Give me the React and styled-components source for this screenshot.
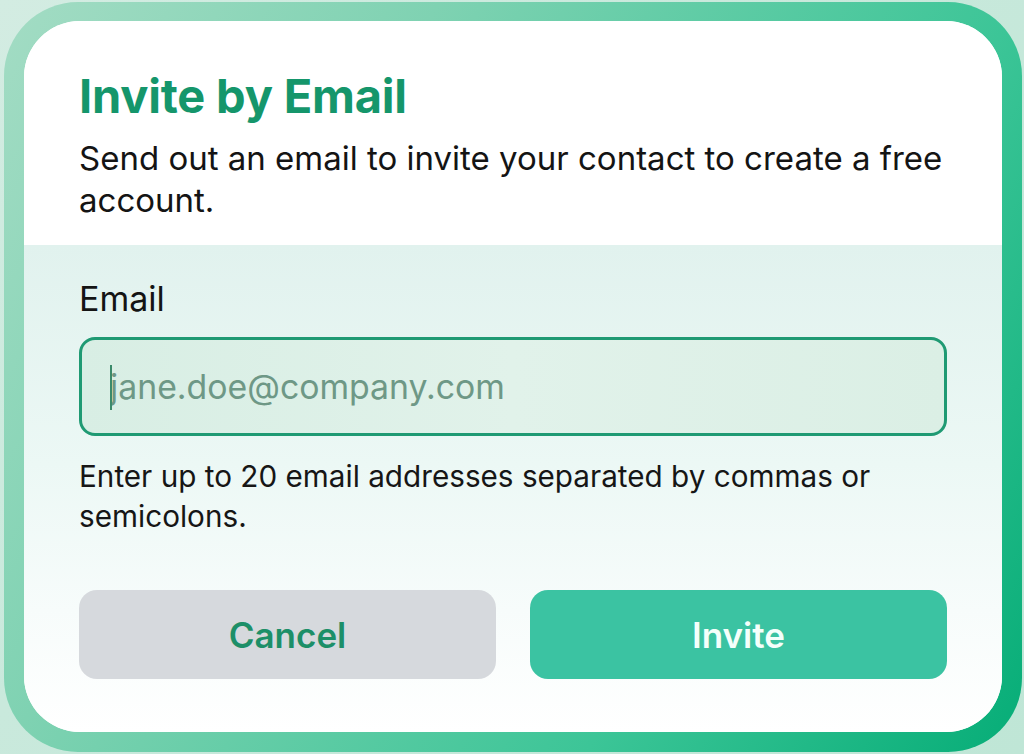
import React from "react";
import styled, { createGlobalStyle } from "styled-components";

const GlobalStyle = createGlobalStyle`
  html, body {
    margin: 0;
    padding: 0;
    height: 100%;
  }
  body {
    font-family: Inter, "Noto Sans", "Liberation Sans", sans-serif;
    background: linear-gradient(135deg, #d3ece2 0%, #c9e9dc 40%, #bfe6d6 100%);
    overflow: hidden;
  }
`;

const Page = styled.div`
  width: 1024px;
  height: 754px;
  padding: 2px 2px 2px 4px;
  box-sizing: border-box;
`;

const Frame = styled.div`
  height: 750px;
  box-sizing: border-box;
  padding: 19px 20px 20px 20px;
  border-radius: 74px;
  background: linear-gradient(120deg, #a3dcc4 0%, #7fd2b2 30%, #3cc597 70%, #06ad77 100%);
`;

const Card = styled.div`
  height: 100%;
  border-radius: 56px;
  background: #ffffff;
  overflow: hidden;
  display: flex;
  flex-direction: column;
`;

const Header = styled.div`
  padding: 48px 55px 0 55px;
  height: 224px;
  box-sizing: border-box;
  background: #ffffff;
`;

const Title = styled.h1`
  margin: 0;
  font-size: 47px;
  line-height: 54px;
  font-weight: 700;
  color: #15966b;
  letter-spacing: -0.2px;
`;

const Subtitle = styled.p`
  margin: 14px 0 0 0;
  font-size: 33px;
  line-height: 42px;
  color: #141414;
`;

const Body = styled.div`
  flex: 1;
  padding: 34px 55px 0 55px;
  background: linear-gradient(180deg, #e1f2ee 0%, #ecf8f5 45%, #f7fcfb 75%, #ffffff 100%);
`;

const Label = styled.div`
  font-size: 34px;
  line-height: 40px;
  color: #141414;
`;

const Field = styled.div`
  position: relative;
  margin-top: 18px;
`;

const Input = styled.input`
  display: block;
  width: 100%;
  box-sizing: border-box;
  height: 99px;
  border: 3px solid #1f9a73;
  border-radius: 16px;
  background: linear-gradient(90deg, #d8eee4 0%, #e1f2ea 50%, #dbefe5 100%);
  padding: 0 28px;
  font-family: inherit;
  font-size: 33.8px;
  color: #1c3d30;
  caret-color: transparent;
  outline: none;
  &::placeholder {
    color: #6e9886;
  }
`;

const Caret = styled.span`
  position: absolute;
  left: 31px;
  top: 28px;
  width: 2px;
  height: 45px;
  background: #3a8a6a;
`;

const Help = styled.p`
  margin: 20px 0 0 0;
  font-size: 29.7px;
  line-height: 40px;
  color: #161616;
`;

const Actions = styled.div`
  display: grid;
  grid-template-columns: 1fr 1fr;
  gap: 34px;
  margin-top: 54px;
`;

const Button = styled.button`
  height: 89px;
  border: none;
  border-radius: 18px;
  font-family: inherit;
  font-size: 35px;
  font-weight: 600;
  cursor: pointer;
  background: ${(p) => (p.$primary ? "#3bc3a2" : "#d6d9dd")};
  color: ${(p) => (p.$primary ? "#f4fffb" : "#1d8f68")};
`;

export default function App() {
  return (
    <Page>
      <GlobalStyle />
      <Frame>
        <Card>
          <Header>
            <Title>Invite by Email</Title>
            <Subtitle>
              Send out an email to invite your contact to create a free account.
            </Subtitle>
          </Header>
          <Body>
            <Label>Email</Label>
            <Field>
              <Input placeholder="jane.doe@company.com" />
              <Caret />
            </Field>
            <Help>
              Enter up to 20 email addresses separated by commas or semicolons.
            </Help>
            <Actions>
              <Button>Cancel</Button>
              <Button $primary>Invite</Button>
            </Actions>
          </Body>
        </Card>
      </Frame>
    </Page>
  );
}
